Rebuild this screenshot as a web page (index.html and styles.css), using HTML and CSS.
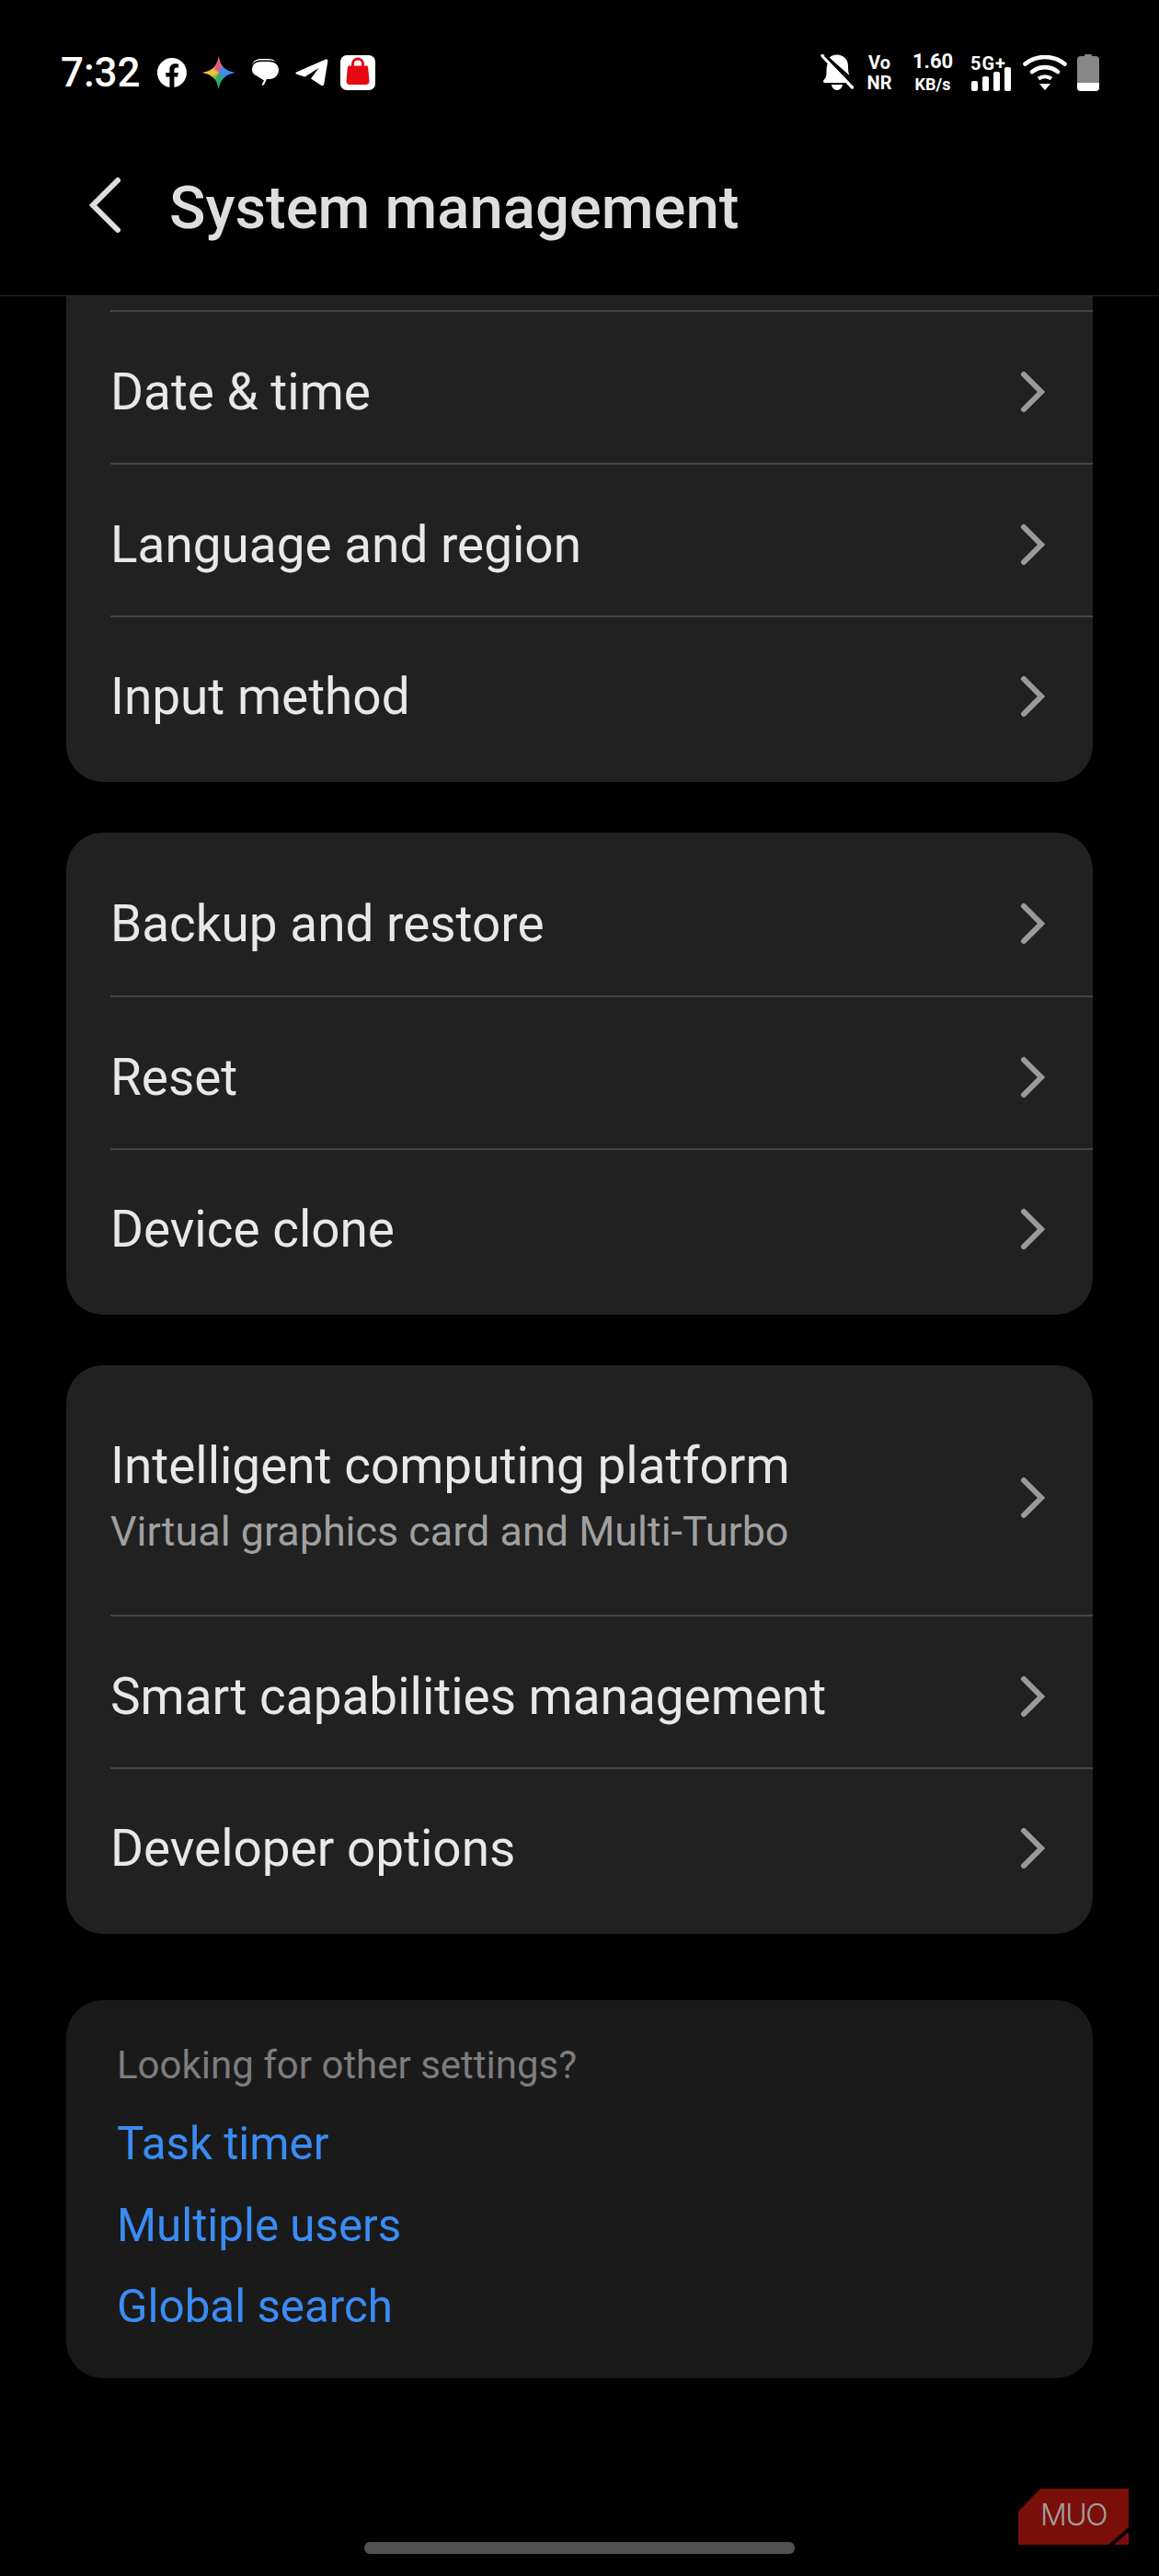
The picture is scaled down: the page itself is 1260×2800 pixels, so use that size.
FILE: index.html
```html
<!DOCTYPE html>
<html lang="en">
<head>
<meta charset="utf-8">
<title>System management</title>
<link rel="stylesheet" href="styles.css">
</head>
<body>
<div class="phone">
  <div class="status">
    <div class="status-left">
      <span class="time">7:32</span>
      <span class="slot"><svg width="32" height="32" viewBox="0 0 32 32"><path fill="#fff" d="M16 0a16 16 0 0 0-2.6 31.8V20.6H9.3V16h4.1v-3.5c0-4 2.4-6.2 6-6.2 1.8 0 3.6.3 3.6.3v3.9h-2c-2 0-2.6 1.2-2.6 2.5v3h4.4l-.7 4.6h-3.7v11.2A16 16 0 0 0 16 0z"/></svg></span>
      <span class="slot"><span class="star"></span></span>
      <span class="slot"><svg width="32" height="32" viewBox="0 0 32 32"><path fill="#fff" d="M2 8C3 3 7 1 12 1h8c4 0 6 1 7 3-2-1-4-1.400-7-1.400h-8C7 2.600 4 4 2 8z"/><path fill="#fff" d="M12 4h8c6 0 11 3 11 9s-5 10-10 10h-3l-3 6c-1 1-2 1-2.500 0L15 24.600 8 20C4 18 2 16 2 13c0-6 4-9 10-9z"/></svg></span>
      <span class="slot"><svg width="36" height="32" viewBox="0 0 36 32"><path fill="#fff" d="M1 15.500 33 1.500c1.500-.6 2.700.5 2.400 2l-4.200 25c-.3 1.500-1.800 2-3 1.200L17 22.500l8.500-11.500-15 9.500-8.800-2.700c-1.500-.5-1.400-1.700-.7-2.300z"/></svg></span>
      <span class="slot"><svg width="38" height="38" viewBox="0 0 38 38"><rect width="38" height="38" rx="7" fill="#fff"/><path fill="none" stroke="#e50914" stroke-width="2.800" d="M13.500 12V9.500a5.500 5.500 0 0 1 11 0V12"/><path fill="#e50914" d="M9.500 11.500h19c1 0 1.500.6 1.600 1.500l1.400 15c.2 2.500-1.500 4-3.500 4h-18c-2 0-3.700-1.500-3.500-4l1.400-15c.1-.9.600-1.500 1.600-1.500z"/></svg></span>
    </div>
    <div class="status-right">
      <span class="bell"><svg width="36" height="40" viewBox="0 0 36 40"><path fill="#fff" d="M5 4.500 32 31H5c-2 0-2.500-2-1.500-3 2.500-2.500 3-4 3-9 0-5 .5-9 3-11.500zM9.500 3.500C12 1.500 14.500 .500 18 .500c7 0 12 5 12 12 0 5 .3 8 1.500 10.500z"/><path fill="#fff" d="M12 33h12c-.5 3.500-3 6-6 6s-5.500-2.500-6-6z"/><path fill="none" stroke="#fff" stroke-width="3.400" stroke-linecap="round" d="M2 1.500 34.500 36"/><path fill="none" stroke="#000" stroke-width="2.600" d="M5 1 36 33"/></svg></span>
      <span class="stack vonr"><span>Vo</span><span>NR</span></span>
      <span class="stack speed"><span class="speed-num">1.60</span><span>KB/s</span></span>
      <span class="net">
        <span class="net-label">5G+</span>
        <svg width="44" height="26" viewBox="0 0 44 26"><rect x="1" y="15" width="7" height="11" rx="2" fill="#fff"/><rect x="13" y="10" width="7" height="16" rx="2" fill="#fff"/><rect x="25" y="5" width="7" height="21" rx="2" fill="#fff"/><rect x="37" y="0" width="7" height="26" rx="2" fill="#fff"/></svg>
      </span>
      <span class="wifi"><svg width="48" height="38" viewBox="0 0 48 38"><g fill="none" stroke="#fff" stroke-width="4.600" stroke-linecap="round"><path d="M2.500 9.500C15 -.5 33 -.5 45.500 9.500"/><path d="M10 18c8.500-6.500 19.500-6.500 28 0"/></g><path fill="none" stroke="#fff" stroke-width="4.200" d="M17 25.500c4-3 10-3 14 0"/><path fill="#fff" d="M18 31h12l-5 6c-.6.700-1.400.700-2 0z"/></svg></span>
      <span class="battery"><span class="battery-cap"></span><span class="battery-body"><span class="battery-fill"></span></span></span>
    </div>
  </div>

  <header class="header">
    <svg class="back" width="40" height="72" viewBox="0 0 40 72"><path fill="none" stroke="#dedede" stroke-width="6" stroke-linecap="round" stroke-linejoin="miter" d="M34 6 7 33l27 27"/></svg>
    <h1 class="title">System management</h1>
  </header>

  <main class="content">
    <section class="card card-first">
      <div class="row"><span class="row-title">Date &amp; time</span><svg class="chev" width="30" height="46" viewBox="0 0 30 46"><path d="M5 4l19 19-19 19"/></svg></div>
      <div class="row"><span class="row-title">Language and region</span><svg class="chev" width="30" height="46" viewBox="0 0 30 46"><path d="M5 4l19 19-19 19"/></svg></div>
      <div class="row row-last"><span class="row-title">Input method</span><svg class="chev" width="30" height="46" viewBox="0 0 30 46"><path d="M5 4l19 19-19 19"/></svg></div>
    </section>

    <section class="card">
      <div class="row row-first"><span class="row-title">Backup and restore</span><svg class="chev" width="30" height="46" viewBox="0 0 30 46"><path d="M5 4l19 19-19 19"/></svg></div>
      <div class="row"><span class="row-title">Reset</span><svg class="chev" width="30" height="46" viewBox="0 0 30 46"><path d="M5 4l19 19-19 19"/></svg></div>
      <div class="row row-last"><span class="row-title">Device clone</span><svg class="chev" width="30" height="46" viewBox="0 0 30 46"><path d="M5 4l19 19-19 19"/></svg></div>
    </section>

    <section class="card">
      <div class="row row-tall"><span class="row-text"><span class="row-title">Intelligent computing platform</span><span class="row-sub">Virtual graphics card and Multi-Turbo</span></span><svg class="chev" width="30" height="46" viewBox="0 0 30 46"><path d="M5 4l19 19-19 19"/></svg></div>
      <div class="row"><span class="row-title">Smart capabilities management</span><svg class="chev" width="30" height="46" viewBox="0 0 30 46"><path d="M5 4l19 19-19 19"/></svg></div>
      <div class="row row-last"><span class="row-title">Developer options</span><svg class="chev" width="30" height="46" viewBox="0 0 30 46"><path d="M5 4l19 19-19 19"/></svg></div>
    </section>

    <section class="card card-links">
      <p class="links-head">Looking for other settings?</p>
      <a class="link">Task timer</a>
      <a class="link">Multiple users</a>
      <a class="link">Global search</a>
    </section>
  </main>

  <div class="home-bar"></div>
  <div class="watermark">
    <svg width="120" height="61" viewBox="0 0 120 61"><path fill="#7a0f0a" d="M24 0h96v42L98 61H0V25z"/><path fill="#7a0f0a" d="M120 47v14h-16z"/></svg>
    <span class="watermark-text">MUO</span>
  </div>
</div>
</body>
</html>
```
FILE: styles.css
```css
* { box-sizing: border-box; }
html, body { margin: 0; padding: 0; background: #000; }
.phone {
  position: relative;
  width: 1260px;
  height: 2800px;
  overflow: hidden;
  background: #000;
  font-family: Roboto, "Noto Sans", sans-serif;
}

/* status bar */
.status {
  height: 100px;
  padding: 58px 65px 0 66px;
  display: flex;
  justify-content: space-between;
  align-items: center;
  color: #fff;
}
.status-left, .status-right { display: flex; align-items: center; height: 42px; }
.time { width: 84px; margin-right: 12px; font-size: 44px; font-weight: 500; line-height: 42px; white-space: nowrap; }
.slot { width: 50.5px; height: 42px; display: flex; align-items: center; justify-content: center; }
.star {
  display: block;
  width: 36px;
  height: 36px;
  background: conic-gradient(from 45deg, #3f8cf2 0 20%, #34a866 32% 42%, #f0c43a 58% 66%, #e0607a 80% 90%, #3f8cf2 100%);
  clip-path: path("M18 0C20 11 25 16 36 18 25 20 20 25 18 36 16 25 11 20 0 18 11 16 16 11 18 0z");
}
.bell { width: 36px; height: 40px; margin-right: 14px; display: flex; }
.stack { display: flex; flex-direction: column; align-items: center; font-weight: 700; }
.vonr { width: 28px; margin-right: 22px; font-size: 20px; line-height: 22px; }
.speed { width: 44px; margin-right: 19px; font-size: 18px; line-height: 25px; }
.speed-num { font-size: 22px; line-height: 24px; }
.net { width: 45px; height: 40px; margin-right: 12px; position: relative; display: flex; align-items: flex-end; }
.net-label { position: absolute; left: 0; top: 0; font-size: 20px; font-weight: 700; line-height: 20px; letter-spacing: 1px; }
.wifi { width: 48px; height: 38px; margin-right: 11px; display: flex; }
.battery { width: 24px; height: 40px; display: flex; flex-direction: column; align-items: center; }
.battery-cap { width: 8px; height: 2px; background: #888; border-radius: 1px 1px 0 0; }
.battery-body { width: 24px; height: 38px; background: #878787; border-radius: 4px; display: flex; flex-direction: column; justify-content: flex-end; overflow: hidden; }
.battery-fill { height: 9px; background: #fff; }

/* header */
.header {
  height: 222px;
  padding: 31px 0 0 94px;
  display: flex;
  align-items: center;
  border-bottom: 1px solid #2a2a2a;
}
.back { margin-right: 50px; flex: none; }
.title { margin: 0; font-size: 65.2px; font-weight: 500; color: #dedede; line-height: 70px; white-space: nowrap; }

/* cards */
.content { padding: 0 72px; display: flex; flex-direction: column; }
.card { background: #212121; border-radius: 40px; margin-bottom: 55px; }
.card-first { padding-top: 15px; border-radius: 0 0 40px 40px; }
.row {
  height: 166px;
  margin-left: 48px;
  padding: 9px 50px 0 0;
  display: flex;
  align-items: center;
  justify-content: space-between;
  border-top: 2px solid #454545;
}
.row-first { height: 177px; border-top: 0; padding-top: 21px; }
.row-last { height: 181px; padding-bottom: 16px; }
.row-tall { height: 271px; border-top: 0; padding-top: 16px; }
.row-text { display: flex; flex-direction: column; }
.row-title { font-size: 54.9px; color: #e8e8e8; line-height: 64px; white-space: nowrap; }
.row-sub { font-size: 44.9px; color: #a0a0a0; line-height: 60px; margin-top: 10px; white-space: nowrap; }
.chev { flex: none; }
.chev path { fill: none; stroke: #9a9a9a; stroke-width: 6; stroke-linecap: round; stroke-linejoin: miter; }

.card-links { background: #1a1a1a; height: 411px; margin: 17px 0 0; padding: 43px 55px 0; display: flex; flex-direction: column; }
.links-head { margin: 0 0 13px; font-size: 42px; line-height: 56px; color: #7d7d7d; }
.link { font-size: 49.3px; line-height: 88.5px; color: #3a8cf5; }

/* overlays */
.home-bar { position: absolute; left: 396px; top: 2763px; width: 468px; height: 13px; border-radius: 6px; background: #525252; }
.watermark { position: absolute; left: 1107px; top: 2705px; width: 120px; height: 61px; }
.watermark svg { display: block; }
.watermark-text { position: absolute; left: 24px; top: 11px; font-family: Inter, sans-serif; font-size: 32px; font-weight: 300; line-height: 36px; letter-spacing: -1.500px; color: #a0a0a0; }
```
